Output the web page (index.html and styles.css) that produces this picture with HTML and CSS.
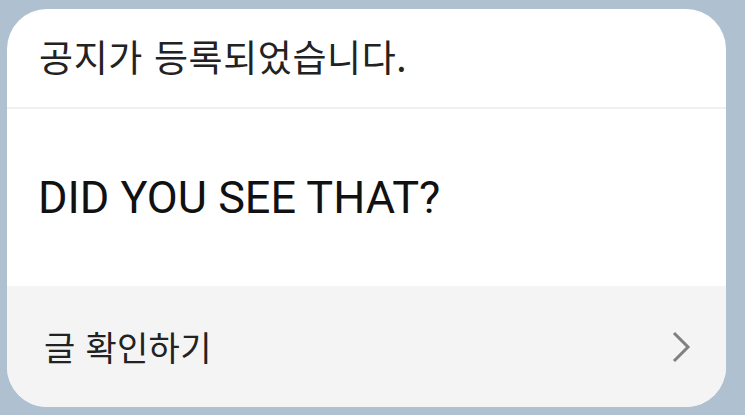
FILE: index.html
```html
<!DOCTYPE html>
<html lang="ko">

<head>
  <meta charset="UTF-8">
  <meta name="viewport" content="width=device-width, initial-scale=1">
  <title>공지 알림</title>
  <link rel="stylesheet" href="styles.css">
</head>

<body>
  <div class="notice_card">
    <div class="notice_header">공지가 등록되었습니다.</div>
    <div class="notice_body">DID YOU SEE THAT?</div>
    <div class="notice_footer">
      <span>글 확인하기</span>
      <svg class="notice_chevron" width="20" height="32" viewBox="0 0 20 32">
        <path d="M3 2 L17 16 L3 30" fill="none" stroke="#808080" stroke-width="3" />
      </svg>
    </div>
  </div>
</body>

</html>
```

FILE: styles.css
```css
body {
  margin: 0;
  padding: 9px 19px 8px 7px;
  background: #afc1d0;
  font-family: "Noto Sans CJK KR", "Noto Sans", sans-serif;
}

.notice_card {
  height: 398px;
  background: #fff;
  border-radius: 40px;
  overflow: hidden;
  display: flex;
  flex-direction: column;
}

.notice_header {
  height: 100px;
  padding-left: 32px;
  padding-bottom: 4px;
  box-sizing: border-box;
  display: flex;
  align-items: center;
  font-size: 37px;
  letter-spacing: 0.6px;
  color: #222;
  border-bottom: 2px solid #efefef;
}

.notice_body {
  height: 177px;
  padding-left: 31px;
  display: flex;
  align-items: center;
  font-family: Roboto, sans-serif;
  font-size: 45px;
  color: #111;
}

.notice_footer {
  flex: 1;
  background: #f4f4f4;
  padding: 0 35px 0 37px;
  display: flex;
  align-items: center;
  justify-content: space-between;
  font-size: 34px;
  letter-spacing: 0.3px;
  color: #222;
}
```
